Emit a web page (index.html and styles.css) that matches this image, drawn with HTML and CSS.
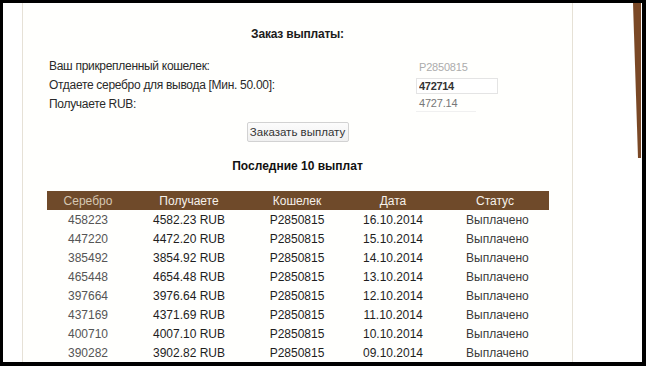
FILE: index.html
```html
<!DOCTYPE html>
<html lang="ru">
<head>
<meta charset="utf-8">
<title>Заказ выплаты</title>
<link rel="stylesheet" href="styles.css">
</head>
<body>
<div class="screen">
  <div class="panel">
    <h2 class="title">Заказ выплаты:</h2>
    <div class="form">
      <div class="label">Ваш прикрепленный кошелек:</div>
      <div class="value wallet">P2850815</div>
      <div class="label">Отдаете серебро для вывода [Мин. 50.00]:</div>
      <div class="value"><input class="amount" type="text" value="472714"></div>
      <div class="label">Получаете RUB:</div>
      <div class="value"><span class="receive">4727.14</span></div>
    </div>
    <div class="actions"><button class="btn" type="button">Заказать выплату</button></div>
    <h3 class="subtitle">Последние 10 выплат</h3>
    <table class="payouts">
      <colgroup>
        <col class="c1"><col class="c2"><col class="c3"><col class="c4"><col class="c5">
      </colgroup>
      <thead>
        <tr><th class="h-first">Серебро</th><th>Получаете</th><th>Кошелек</th><th>Дата</th><th>Статус</th></tr>
      </thead>
      <tbody>
        <tr><td class="silver">458223</td><td>4582.23 RUB</td><td>P2850815</td><td>16.10.2014</td><td class="status">Выплачено</td></tr>
        <tr><td class="silver">447220</td><td>4472.20 RUB</td><td>P2850815</td><td>15.10.2014</td><td class="status">Выплачено</td></tr>
        <tr><td class="silver">385492</td><td>3854.92 RUB</td><td>P2850815</td><td>14.10.2014</td><td class="status">Выплачено</td></tr>
        <tr><td class="silver">465448</td><td>4654.48 RUB</td><td>P2850815</td><td>13.10.2014</td><td class="status">Выплачено</td></tr>
        <tr><td class="silver">397664</td><td>3976.64 RUB</td><td>P2850815</td><td>12.10.2014</td><td class="status">Выплачено</td></tr>
        <tr><td class="silver">437169</td><td>4371.69 RUB</td><td>P2850815</td><td>11.10.2014</td><td class="status">Выплачено</td></tr>
        <tr><td class="silver">400710</td><td>4007.10 RUB</td><td>P2850815</td><td>10.10.2014</td><td class="status">Выплачено</td></tr>
        <tr><td class="silver">390282</td><td>3902.82 RUB</td><td>P2850815</td><td>09.10.2014</td><td class="status">Выплачено</td></tr>
      </tbody>
    </table>
  </div>
  <svg class="edge" width="9" height="160" viewBox="0 0 9 160" aria-hidden="true">
    <polygon points="0,0 8,0 8,155 5,155" fill="#7a4826"/>
  </svg>
</div>
</body>
</html>
```

FILE: styles.css
```css
html, body {
  margin: 0;
  padding: 0;
  background: #000;
}

body {
  font-family: "Liberation Sans", Arial, sans-serif;
  font-size: 12px;
  color: #222;
}

.screen {
  position: relative;
  width: 620px;
  height: 359px;
  margin: 3px 4px 4px 3px;
  padding-left: 19px;
  background: #fff;
  overflow: hidden;
}

.panel {
  width: 549px;
  height: 359px;
  border-left: 1px solid #e6e1d6;
  border-right: 1px solid #e6e1d6;
  background: #fffffd;
  display: flex;
  flex-direction: column;
  overflow: hidden;
}

.title {
  margin: 24px 0 0;
  font-size: 12px;
  line-height: 14px;
  font-weight: bold;
  text-align: center;
  color: #1c1c1c;
  letter-spacing: -0.2px;
}

.form {
  margin: 16px 0 0 26px;
  display: grid;
  grid-template-columns: 367px 1fr;
  grid-auto-rows: 19px;
  align-items: center;
}

.label {
  color: #2a2a2a;
  line-height: 19px;
  letter-spacing: -0.3px;
}

.value {
  display: flex;
  align-items: center;
}

.wallet {
  color: #acacac;
  font-size: 11px;
  padding-left: 3px;
  letter-spacing: -0.2px;
}

.amount {
  width: 82px;
  height: 16px;
  box-sizing: border-box;
  border: 1px solid #e4e4e4;
  padding: 0 2px;
  font-family: "Liberation Sans", Arial, sans-serif;
  font-size: 11px;
  font-weight: bold;
  letter-spacing: -0.3px;
  color: #333;
  background: #fff;
  outline: none;
}

.receive {
  display: block;
  width: 54px;
  padding: 0 3px 2px;
  border-bottom: 1px solid #f0f0f0;
  color: #777;
  font-size: 11px;
  letter-spacing: -0.2px;
}

.actions {
  margin-top: 8px;
  display: flex;
  justify-content: center;
}

.btn {
  width: 102px;
  height: 20px;
  padding: 0;
  border: 1px solid #d2d2d2;
  border-radius: 2px;
  background: linear-gradient(#fcfcfc, #f0f0f0);
  font-family: "Liberation Sans", Arial, sans-serif;
  font-size: 11.5px;
  color: #333;
}

.subtitle {
  margin: 17px 0 0;
  font-size: 12px;
  line-height: 14px;
  font-weight: bold;
  text-align: center;
  color: #111;
}

.payouts {
  margin: 18px 0 0 24px;
  width: 502px;
  border-collapse: collapse;
  table-layout: fixed;
}

.c1 { width: 82px; }
.c2 { width: 120px; }
.c3 { width: 96px; }
.c4 { width: 96px; }
.c5 { width: 108px; }

.payouts th {
  height: 19px;
  padding: 0;
  background: #6f4a2a;
  color: #f6f1ea;
  font-weight: normal;
  font-size: 12px;
  text-align: center;
}

.payouts th.h-first {
  color: #d6c7b2;
}

.payouts td {
  height: 19px;
  padding: 0;
  text-align: center;
  color: #1e1e1e;
  font-size: 12px;
}

.payouts td.silver {
  color: #555;
}

.payouts td.status {
  color: #3a3a3a;
  text-align: left;
  padding-left: 25px;
}

.edge {
  position: absolute;
  top: 0;
  right: 0;
}
```
